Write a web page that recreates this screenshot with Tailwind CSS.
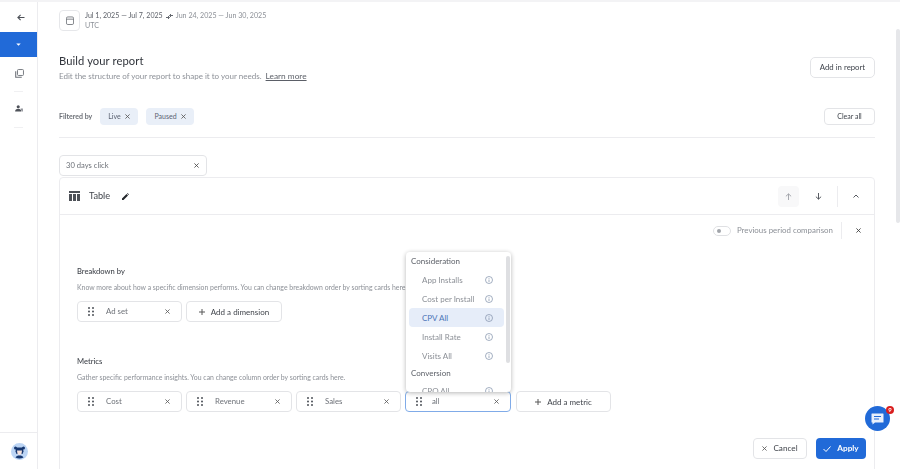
<!DOCTYPE html>
<html><head><meta charset="utf-8"><script src="https://cdn.jsdelivr.net/npm/@tailwindcss/browser@4"></script></head>
<body class="m-0 bg-white">
<div class="relative w-[900px] h-[469px] overflow-hidden flex border-t-2 border-[#f3f3f5] opacity-[.99] font-['Lato','Liberation_Sans',sans-serif] text-[#6b6f76]">
  <aside class="w-[38px] shrink-0 border-r border-[#ececef] flex flex-col items-stretch">
    <div class="h-[30px] flex items-center justify-center pt-[1px] pl-[4px]">
      <svg class="w-[8px] h-[7px]" viewBox="0 0 10 9" fill="none" stroke="#4a4e55" stroke-width="1.4"><path d="M9.500 4.500H1M4.500 1 1 4.500 4.500 8"/></svg>
    </div>
    <div class="h-[25px] bg-[#1f69d8] flex items-center justify-center">
      <svg class="w-[5px] h-[3px]" viewBox="0 0 6 4" fill="#fff"><path d="M0 .5h6L3 3.800z"/></svg>
    </div>
    <div class="h-[34px] flex items-center justify-center pb-[2px] pl-[1px]">
      <svg class="w-[9px] h-[9px]" viewBox="0 0 10 10" fill="none" stroke="#6a6e75" stroke-width="1"><rect x="2.800" y=".6" width="6.600" height="6.600" rx="1"/><path d="M.8 2.500v6.700h6.700" stroke-width="1.200"/></svg>
    </div>
    <div class="mx-[14px] h-px bg-[#f0f0f2]"></div>
    <div class="h-[35px] flex items-center justify-center pb-[2px]">
      <svg class="w-[8px] h-[7px]" viewBox="0 0 10 9" fill="#4d5159"><circle cx="4" cy="2.200" r="2"/><path d="M0 8.500c0-2.400 1.600-3.600 4-3.600s4 1.200 4 3.600z"/><path d="M7 4.500h3v4H8.600z" fill="#8b8e94"/></svg>
    </div>
    <div class="mx-[14px] h-px bg-[#f0f0f2]"></div>
    <div class="mt-auto h-[37px] border-t border-[#ececef] flex items-center justify-center pl-[1px]">
      <svg class="w-[17px] h-[17px]" viewBox="0 0 17 17"><circle cx="8.500" cy="8.500" r="8.500" fill="#bcd5f5"/><circle cx="4.500" cy="5" r="1.500" fill="#14356f"/><circle cx="12.500" cy="5" r="1.500" fill="#14356f"/><path d="M5 4.500h7l.5 4-1 2.500h-6l-1-2.500z" fill="#14356f"/><path d="M6 7.500h5l-.5 3.500-2 1-2-1z" fill="#f6e3de"/><path d="M4.500 14.500c1-1.500 2-2 4-2s3 .5 4 2a8.500 8.500 0 0 1-8 0z" fill="#14356f"/></svg>
    </div>
  </aside>

  <main class="flex-1 min-w-0 pl-[21px] pr-[25px]">
    <div class="h-[21px] mt-[8px] flex items-center gap-[5px]">
      <div class="w-[21px] h-[21px] border border-[#e6e7ea] rounded-[4px] flex items-center justify-center">
        <svg class="w-[8px] h-[9px]" viewBox="0 0 9 10" fill="none" stroke="#62666d" stroke-width=".9"><rect x=".5" y="1" width="8" height="8.500" rx="1.500"/><path d="M.5 3.500h8"/></svg>
      </div>
      <div class="text-[7.100px] leading-[10px] pt-[1px]">
        <div class="whitespace-nowrap flex items-center"><span class="text-[#5a5e66]">Jul 1, 2025 — Jul 7, 2025</span><svg class="w-[7px] h-[5px] mx-[3px]" viewBox="0 0 7 5" fill="none" stroke="#3a3f47" stroke-width=".8"><path d="M0 3.500h3M4 1.500h3M2 2 3.500 3.500 2 5M5 0 3.500 1.500 5 3"/></svg><span class="text-[#8b8f96]">Jun 24, 2025 — Jun 30, 2025</span></div>
        <div class="text-[#8b8f96]">UTC</div>
      </div>
    </div>

    <div class="flex items-start justify-between mt-[21px] h-[36px]">
      <div class="pt-[1px]">
        <h1 class="text-[11.200px] leading-[16px] text-[#2f333a] font-normal tracking-[.1px]">Build your report</h1>
        <p class="text-[8px] leading-[12px] mt-[1px] text-[#8b8f96]">Edit the structure of your report to shape it to your needs. <span class="ml-[2px] underline text-[#5a5e66] text-[8.300px]">Learn more</span></p>
      </div>
      <button class="w-[65px] h-[21px] mt-[5px] border border-[#e3e4e7] rounded-[5px] text-[7.800px] text-[#3a3f47]">Add in report</button>
    </div>

    <div class="flex items-center mt-[20px] h-[17px]">
      <span class="text-[7px] font-bold text-[#6b6f76] w-[41px]">Filtered by</span>
      <span class="h-[17px] w-[38px] bg-[#e9eff8] rounded-[4px] flex items-center justify-center gap-[4px] text-[7px] text-[#5a6272]">Live <svg class="w-[5px] h-[5px]" viewBox="0 0 6 6" stroke="#555" fill="none"><path d="m.5.5 5 5m0-5-5 5"/></svg></span>
      <span class="h-[17px] w-[48px] ml-[8px] bg-[#e9eff8] rounded-[4px] flex items-center justify-center gap-[4px] text-[7px] text-[#5a6272]">Paused <svg class="w-[5px] h-[5px]" viewBox="0 0 6 6" stroke="#555" fill="none"><path d="m.5.5 5 5m0-5-5 5"/></svg></span>
      <button class="ml-auto w-[51px] h-[17px] border border-[#e3e4e7] rounded-[4px] text-[7px] text-[#3a3f47]">Clear all</button>
    </div>

    <div class="h-px bg-[#ececef] mt-[12px]"></div>

    <div class="w-[148px] h-[21px] mt-[17px] border border-[#e3e4e7] rounded-[4px] flex items-center justify-between pl-[6px] pr-[7px] text-[7.600px]">30 days click
      <svg class="w-[5px] h-[5px]" viewBox="0 0 6 6" stroke="#444" fill="none"><path d="m.5.5 5 5m0-5-5 5"/></svg>
    </div>

    <section class="mt-[1px] border border-[#ececef] rounded-t-[4px] h-[320px] flex flex-col">
      <header class="h-[37px] shrink-0 border-b border-[#ececef] flex items-center pl-[9px] pr-[12px]">
        <svg class="w-[11px] h-[10px]" viewBox="0 0 11 10" fill="#4b4f56"><path d="M0 0h11v2H0zM0 3h3v7H0zM4 3h3v7H4zM8 3h3v7H8z"/></svg>
        <span class="ml-[9px] text-[9.200px] text-[#3f434a]">Table</span>
        <svg class="ml-[12px] w-[7px] h-[7px]" viewBox="0 0 7 7" fill="#22252a"><path d="M0 7V5.500L4.500 1 6 2.500 1.500 7zM5 .5 5.500 0 7 1.500l-.5.5z"/></svg>
        <div class="ml-auto w-[21px] h-[21px] bg-[#f8f8f9] rounded-[4px] flex items-center justify-center">
          <svg class="w-[7px] h-[7px]" viewBox="0 0 8 8" stroke="#9a9da3" fill="none"><path d="M4 8V1M1 3.800 4 1l3 2.800"/></svg>
        </div>
        <div class="w-[20px] ml-[9px] flex justify-center">
          <svg class="w-[7px] h-[7px]" viewBox="0 0 8 8" stroke="#3f434a" fill="none"><path d="M4 0v7M1 4.200 4 7l3-2.800"/></svg>
        </div>
        <div class="w-px h-[21px] bg-[#ececef] ml-[9px]"></div>
        <div class="w-[6px] ml-[15px] mr-[3px]">
          <svg class="w-[6px] h-[4px] block" viewBox="0 0 6 4" stroke="#55595f" fill="none"><path d="m.5 3.500 2.500-2.500 2.500 2.500"/></svg>
        </div>
      </header>
      <div class="flex-1 relative pl-[17px] pr-[8px]">
        <div class="flex items-center justify-end h-[17px] mt-[7px] pr-[5px] text-[7.900px] text-[#8b8f96]">
          <span class="w-[18px] h-[10px] border border-[#dfe0e3] rounded-full flex items-center pl-[3px]"><span class="w-[4px] h-[4px] bg-[#a0a3a9] rounded-full"></span></span>
          <span class="ml-[6px]">Previous period comparison</span>
          <span class="w-px h-[17px] bg-[#ececef] ml-[8px]"></span>
          <svg class="ml-[14px] w-[5px] h-[5px]" viewBox="0 0 6 6" stroke="#333" fill="none"><path d="m.5.5 5 5m0-5-5 5"/></svg>
        </div>

        <h3 class="text-[7.600px] leading-[10px] font-medium text-[#3f434a] mt-[27px]">Breakdown by</h3>
        <p class="text-[6.900px] leading-[10px] mt-[6px] text-[#8b8f96] whitespace-nowrap">Know more about how a specific dimension performs. You can change breakdown order by sorting cards here.</p>
        <div class="flex gap-[4px] mt-[9px]">
          <div class="w-[105px] h-[21px] border border-[#e3e4e7] rounded-[4px] flex items-center pl-[10px] pr-[11px] text-[7.800px]">
            <svg class="w-[6px] h-[9px] shrink-0" viewBox="0 0 6 9" fill="#4b4f56"><circle cx="1" cy="1" r="1"/><circle cx="5" cy="1" r="1"/><circle cx="1" cy="4.500" r="1"/><circle cx="5" cy="4.500" r="1"/><circle cx="1" cy="8" r="1"/><circle cx="5" cy="8" r="1"/></svg>
            <span class="ml-[12px]">Ad set</span>
            <svg class="ml-auto w-[5px] h-[5px]" viewBox="0 0 6 6" stroke="#555" fill="none"><path d="m.5.5 5 5m0-5-5 5"/></svg>
          </div>
          <button class="w-[96px] h-[21px] border border-[#e3e4e7] rounded-[4px] flex items-center justify-center gap-[6px] text-[8px] text-[#3f434a]"><svg class="w-[6px] h-[6px]" viewBox="0 0 6 6" stroke="#555" fill="none"><path d="M3 0v6M0 3h6"/></svg>Add a dimension</button>
        </div>

        <h3 class="text-[7.600px] leading-[10px] font-medium text-[#3f434a] mt-[34px]">Metrics</h3>
        <p class="text-[6.900px] leading-[10px] mt-[6px] text-[#8b8f96]">Gather specific performance insights. You can change column order by sorting cards here.</p>
        <div class="flex gap-[4px] mt-[9px]">
          <div class="w-[105px] h-[21px] border border-[#e3e4e7] rounded-[4px] flex items-center pl-[10px] pr-[11px] text-[7.800px]">
            <svg class="w-[6px] h-[9px] shrink-0" viewBox="0 0 6 9" fill="#4b4f56"><circle cx="1" cy="1" r="1"/><circle cx="5" cy="1" r="1"/><circle cx="1" cy="4.500" r="1"/><circle cx="5" cy="4.500" r="1"/><circle cx="1" cy="8" r="1"/><circle cx="5" cy="8" r="1"/></svg>
            <span class="ml-[12px]">Cost</span>
            <svg class="ml-auto w-[5px] h-[5px]" viewBox="0 0 6 6" stroke="#555" fill="none"><path d="m.5.5 5 5m0-5-5 5"/></svg>
          </div>
          <div class="w-[106px] h-[21px] border border-[#e3e4e7] rounded-[4px] flex items-center pl-[10px] pr-[11px] text-[7.800px]">
            <svg class="w-[6px] h-[9px] shrink-0" viewBox="0 0 6 9" fill="#4b4f56"><circle cx="1" cy="1" r="1"/><circle cx="5" cy="1" r="1"/><circle cx="1" cy="4.500" r="1"/><circle cx="5" cy="4.500" r="1"/><circle cx="1" cy="8" r="1"/><circle cx="5" cy="8" r="1"/></svg>
            <span class="ml-[12px]">Revenue</span>
            <svg class="ml-auto w-[5px] h-[5px]" viewBox="0 0 6 6" stroke="#555" fill="none"><path d="m.5.5 5 5m0-5-5 5"/></svg>
          </div>
          <div class="w-[105px] h-[21px] border border-[#e3e4e7] rounded-[4px] flex items-center pl-[10px] pr-[11px] text-[7.800px]">
            <svg class="w-[6px] h-[9px] shrink-0" viewBox="0 0 6 9" fill="#4b4f56"><circle cx="1" cy="1" r="1"/><circle cx="5" cy="1" r="1"/><circle cx="1" cy="4.500" r="1"/><circle cx="5" cy="4.500" r="1"/><circle cx="1" cy="8" r="1"/><circle cx="5" cy="8" r="1"/></svg>
            <span class="ml-[12px]">Sales</span>
            <svg class="ml-auto w-[5px] h-[5px]" viewBox="0 0 6 6" stroke="#555" fill="none"><path d="m.5.5 5 5m0-5-5 5"/></svg>
          </div>
          <div class="w-[106px] h-[21px] border-[1.500px] border-[#7fabe8] rounded-[4px] flex items-center pl-[10px] pr-[11px] text-[7.800px]">
            <svg class="w-[6px] h-[9px] shrink-0" viewBox="0 0 6 9" fill="#4b4f56"><circle cx="1" cy="1" r="1"/><circle cx="5" cy="1" r="1"/><circle cx="1" cy="4.500" r="1"/><circle cx="5" cy="4.500" r="1"/><circle cx="1" cy="8" r="1"/><circle cx="5" cy="8" r="1"/></svg>
            <span class="ml-[10px]">all</span>
            <svg class="ml-auto w-[5px] h-[5px]" viewBox="0 0 6 6" stroke="#555" fill="none"><path d="m.5.5 5 5m0-5-5 5"/></svg>
          </div>
          <button class="w-[95px] h-[21px] ml-[1px] border border-[#e3e4e7] rounded-[4px] flex items-center justify-center gap-[6px] text-[8px] text-[#3f434a]"><svg class="w-[6px] h-[6px]" viewBox="0 0 6 6" stroke="#555" fill="none"><path d="M3 0v6M0 3h6"/></svg>Add a metric</button>
        </div>

        <div class="flex justify-end gap-[9px] mt-[26px]">
          <button class="w-[54px] h-[21px] border border-[#e3e4e7] rounded-[4px] flex items-center justify-center gap-[6px] text-[8.200px] text-[#3f434a]"><svg class="w-[5px] h-[5px]" viewBox="0 0 6 6" stroke="#555" fill="none"><path d="m.5.5 5 5m0-5-5 5"/></svg>Cancel</button>
          <button class="w-[50px] h-[21px] bg-[#1f69d8] rounded-[4px] flex items-center justify-center gap-[6px] text-[8.200px] font-bold text-white"><svg class="w-[8px] h-[6px]" viewBox="0 0 8 6" stroke="#fff" fill="none"><path d="m.5 3 2.500 2.500L7.500.5"/></svg>Apply</button>
        </div>
      </div>
    </section>
  </main>

  <div class="absolute left-[406px] top-[250px] w-[105px] h-[140px] bg-white rounded-[4px] shadow-[0_1px_5px_rgba(0,0,0,.3)] overflow-hidden text-[8px]">
    <div class="absolute right-[1px] top-[4px] w-[4px] h-[107px] bg-[#dedfe2] rounded-full"></div>
    <div class="pl-[5px] h-[18px] flex items-center text-[#5a5e66]">Consideration</div>
    <div class="flex flex-col text-[#8b8f96]">
      <div class="h-[19px] mx-[3px] pl-[13px] pr-[11px] w-[95px] flex items-center justify-between">App Installs<svg class="w-[8px] h-[8px]" viewBox="0 0 8 8" fill="none" stroke="#7d8ea8" stroke-width=".7"><circle cx="4" cy="4" r="3.500"/><path d="M4 3.500v2.500M4 2v.8"/></svg></div>
      <div class="h-[19px] mx-[3px] pl-[13px] pr-[11px] w-[95px] flex items-center justify-between">Cost per Install<svg class="w-[8px] h-[8px]" viewBox="0 0 8 8" fill="none" stroke="#7d8ea8" stroke-width=".7"><circle cx="4" cy="4" r="3.500"/><path d="M4 3.500v2.500M4 2v.8"/></svg></div>
      <div class="h-[19px] mx-[3px] pl-[13px] pr-[11px] w-[95px] flex items-center justify-between bg-[#e6edf9] rounded-[4px] text-[#4a74b8]">CPV All<svg class="w-[8px] h-[8px]" viewBox="0 0 8 8" fill="none" stroke="#7d8ea8" stroke-width=".7"><circle cx="4" cy="4" r="3.500"/><path d="M4 3.500v2.500M4 2v.8"/></svg></div>
      <div class="h-[19px] mx-[3px] pl-[13px] pr-[11px] w-[95px] flex items-center justify-between">Install Rate<svg class="w-[8px] h-[8px]" viewBox="0 0 8 8" fill="none" stroke="#7d8ea8" stroke-width=".7"><circle cx="4" cy="4" r="3.500"/><path d="M4 3.500v2.500M4 2v.8"/></svg></div>
      <div class="h-[19px] mx-[3px] pl-[13px] pr-[11px] w-[95px] flex items-center justify-between">Visits All<svg class="w-[8px] h-[8px]" viewBox="0 0 8 8" fill="none" stroke="#7d8ea8" stroke-width=".7"><circle cx="4" cy="4" r="3.500"/><path d="M4 3.500v2.500M4 2v.8"/></svg></div>
    </div>
    <div class="pl-[5px] h-[16px] flex items-center text-[#5a5e66]">Conversion</div>
    <div class="h-[19px] mx-[3px] pl-[13px] pr-[11px] w-[95px] flex items-center justify-between text-[#8b8f96]">CPO All<svg class="w-[8px] h-[8px]" viewBox="0 0 8 8" fill="none" stroke="#7d8ea8" stroke-width=".7"><circle cx="4" cy="4" r="3.500"/><path d="M4 3.500v2.500M4 2v.8"/></svg></div>
  </div>

  <div class="absolute right-0 top-[27px] w-[4px] h-[194px] bg-[#e6e7ea] rounded-full"></div>

  <div class="absolute left-[865px] top-[404px] w-[25px] h-[25px] bg-[#1f69d8] rounded-full flex items-center justify-center">
    <svg class="w-[13px] h-[13px]" viewBox="0 0 13 13"><path d="M1 1.500h11a.5.5 0 0 1 .5.5v8a.5.5 0 0 1-.5.5H4l-2.500 2V10.500H1a.5.5 0 0 1-.5-.5V2a.5.5 0 0 1 .5-.5z" fill="#e8f0fc"/><path d="M3 4h7v1H3zM3 6.500h5v1H3z" fill="#1f69d8"/></svg>
    <span class="absolute right-[-4px] top-0 w-[8px] h-[8px] bg-[#d91c1c] rounded-full text-white text-[6px] leading-[8px] text-center font-bold">9</span>
  </div>
</div>
</body></html>
